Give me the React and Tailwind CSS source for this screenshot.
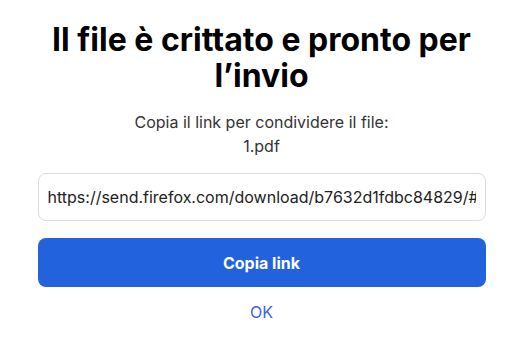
import React from 'react';

const App = () => {
  return (
    <div className="min-h-screen bg-white" style={{ fontFamily: 'Inter, "Liberation Sans", sans-serif' }}>
      <div className="max-w-md mx-auto pt-[22px] flex flex-col items-center text-center">
        <h1 className="text-[32px] leading-9 font-bold text-black">
          Il file è crittato e pronto per l’invio
        </h1>
        <p className="mt-4 text-base leading-6 text-[#333]">
          Copia il link per condividere il file:
          <br />
          1.pdf
        </p>
        <input
          readOnly
          value="https://send.firefox.com/download/b7632d1fdbc84829/#"
          className="mt-[15px] w-full border border-[#ddd] rounded-lg px-[9px] py-[11px] text-base leading-6 text-[#222] outline-none"
        />
        <button className="mt-[17px] w-full h-[49px] rounded-lg bg-[#2262dc] text-white font-bold text-base">
          Copia link
        </button>
        <button className="mt-[13px] text-[#3b5fe0] text-base leading-6">OK</button>
      </div>
    </div>
  );
};

export default App;
